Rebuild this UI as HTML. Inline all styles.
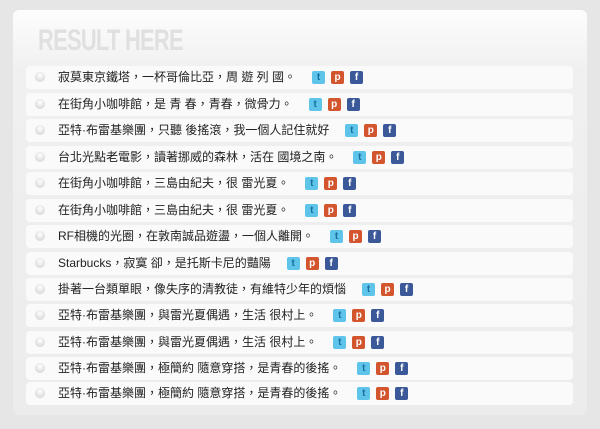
<!DOCTYPE html>
<html><head><meta charset="utf-8"><style>
body{margin:0;width:600px;height:429px;background:#e6e6e6;font-family:"Liberation Sans","Noto Sans CJK TC",sans-serif;overflow:hidden}
.panel{position:absolute;left:13px;top:10px;width:574px;height:405px;border-radius:6px;background:linear-gradient(#fdfdfd 0,#f0f0f0 60px,#ececec 100%)}
h1{position:absolute;left:38px;top:24px;margin:0;font:bold 30px/34px "Liberation Sans",sans-serif;color:#e0e0e0;letter-spacing:-1px;transform:scaleX(.73);transform-origin:left}
.row{position:absolute;left:26px;width:547px;height:23px;background:#fafafa;border-radius:4px;font-size:12px;color:#222;line-height:23px;white-space:nowrap}
.row .b{position:absolute;left:9px;top:6px;width:10px;height:10px;border-radius:50%;background:radial-gradient(circle at 50% 35%,#fff,#ccc)}
.row .t{position:absolute;left:32px;top:0;height:23px}
.ic{display:inline-block;width:13px;height:13px;border-radius:2px;vertical-align:middle;position:relative;top:0;margin-left:6px;color:#fff;font:bold 10px/13px "Liberation Sans",sans-serif;text-align:center;font-style:normal}
.tw{background:#5ec4ea;margin-left:16px;color:#1a6fa0}.p{background:#d3552e}.f{background:#3b5998}
</style></head><body>
<div class="panel"></div>
<h1>RESULT HERE</h1>
<div class="row" style="top:66px"><span class="b"></span><span class="t">寂莫東京鐵塔，一杯哥倫比亞，周 遊 列 國。<i class="ic tw">t</i><i class="ic p">p</i><i class="ic f">f</i></span></div>
<div class="row" style="top:93px"><span class="b"></span><span class="t">在街角小咖啡館，是 青 春，青春，微骨力。<i class="ic tw">t</i><i class="ic p">p</i><i class="ic f">f</i></span></div>
<div class="row" style="top:119px"><span class="b"></span><span class="t">亞特·布雷基樂團，只聽 後搖滾，我一個人記住就好<i class="ic tw">t</i><i class="ic p">p</i><i class="ic f">f</i></span></div>
<div class="row" style="top:146px"><span class="b"></span><span class="t">台北光點老電影，讀著挪威的森林，活在 國境之南。<i class="ic tw">t</i><i class="ic p">p</i><i class="ic f">f</i></span></div>
<div class="row" style="top:172px"><span class="b"></span><span class="t">在街角小咖啡館，三島由紀夫，很 雷光夏。<i class="ic tw">t</i><i class="ic p">p</i><i class="ic f">f</i></span></div>
<div class="row" style="top:199px"><span class="b"></span><span class="t">在街角小咖啡館，三島由紀夫，很 雷光夏。<i class="ic tw">t</i><i class="ic p">p</i><i class="ic f">f</i></span></div>
<div class="row" style="top:225px"><span class="b"></span><span class="t">RF相機的光圈，在敦南誠品遊盪，一個人離開。<i class="ic tw">t</i><i class="ic p">p</i><i class="ic f">f</i></span></div>
<div class="row" style="top:252px"><span class="b"></span><span class="t">Starbucks，寂寞 卻，是托斯卡尼的豔陽<i class="ic tw">t</i><i class="ic p">p</i><i class="ic f">f</i></span></div>
<div class="row" style="top:278px"><span class="b"></span><span class="t">掛著一台類單眼，像失序的清教徒，有維特少年的煩惱<i class="ic tw">t</i><i class="ic p">p</i><i class="ic f">f</i></span></div>
<div class="row" style="top:304px"><span class="b"></span><span class="t">亞特·布雷基樂團，與雷光夏偶遇，生活 很村上。<i class="ic tw">t</i><i class="ic p">p</i><i class="ic f">f</i></span></div>
<div class="row" style="top:331px"><span class="b"></span><span class="t">亞特·布雷基樂團，與雷光夏偶遇，生活 很村上。<i class="ic tw">t</i><i class="ic p">p</i><i class="ic f">f</i></span></div>
<div class="row" style="top:357px"><span class="b"></span><span class="t">亞特·布雷基樂團，極簡約 隨意穿搭，是青春的後搖。<i class="ic tw">t</i><i class="ic p">p</i><i class="ic f">f</i></span></div>
<div class="row" style="top:382px"><span class="b"></span><span class="t">亞特·布雷基樂團，極簡約 隨意穿搭，是青春的後搖。<i class="ic tw">t</i><i class="ic p">p</i><i class="ic f">f</i></span></div>
</body></html>
